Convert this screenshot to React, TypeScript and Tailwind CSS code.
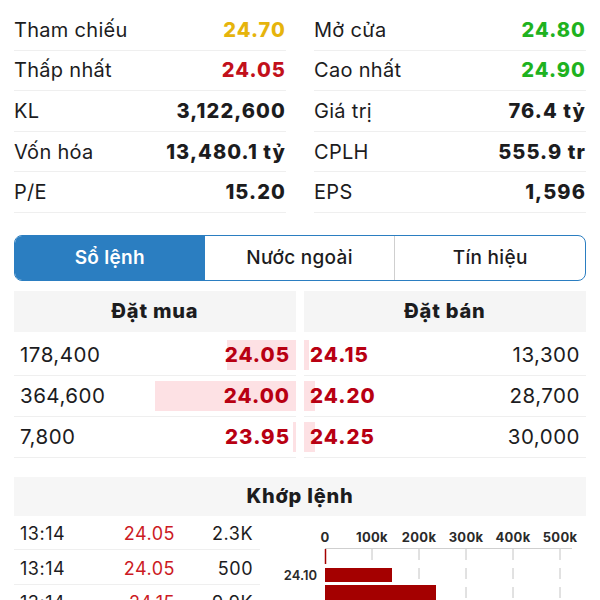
import React from 'react';

const stats = [
  { left: ['Tham chiếu', '24.70', 'text-[#e6b40c]'], right: ['Mở cửa', '24.80', 'text-[#1fb21f]'] },
  { left: ['Thấp nhất', '24.05', 'text-[#c2101b]'], right: ['Cao nhất', '24.90', 'text-[#1fb21f]'] },
  { left: ['KL', '3,122,600', 'text-[#1c1c1e]'], right: ['Giá trị', '76.4 tỷ', 'text-[#1c1c1e]'] },
  { left: ['Vốn hóa', '13,480.1 tỷ', 'text-[#1c1c1e]'], right: ['CPLH', '555.9 tr', 'text-[#1c1c1e]'] },
  { left: ['P/E', '15.20', 'text-[#1c1c1e]'], right: ['EPS', '1,596', 'text-[#1c1c1e]'] },
];

const bids = [
  { qty: '178,400', price: '24.05', bar: 69 },
  { qty: '364,600', price: '24.00', bar: 141 },
  { qty: '7,800', price: '23.95', bar: 3 },
];

const asks = [
  { qty: '13,300', price: '24.15', bar: 5 },
  { qty: '28,700', price: '24.20', bar: 11 },
  { qty: '30,000', price: '24.25', bar: 11 },
];

const trades = [
  ['13:14', '24.05', '2.3K'],
  ['13:14', '24.05', '500'],
  ['13:14', '24.15', '9.9K'],
];

function StatCell({ label, value, color }: { label: string; value: string; color: string }) {
  return (
    <div className="flex items-center justify-between h-[40.6px] border-b border-[#efefef]">
      <span className="text-[20px] tracking-[0.3px] text-[#1c1c1e]">{label}</span>
      <span className={`text-[20px] font-extrabold tracking-[1.1px] ${color}`}>{value}</span>
    </div>
  );
}

function VolumeChart() {
  const ticks = ['0', '100k', '200k', '300k', '400k', '500k'];
  return (
    <svg width="316" height="84" className="block">
      {ticks.map((t, i) => (
        <text key={t} x={55 + i * 47} y={26} textAnchor="middle" fontSize="13" fontWeight="700" fill="#2a2a2a" fontFamily="Inter, sans-serif" letterSpacing="0.3">
          {t}
        </text>
      ))}
      <line x1="55" y1="32.5" x2="302" y2="32.5" stroke="#cfcfcf" strokeWidth="1" />
      {ticks.slice(1).map((t, i) => (
        <line key={t} x1={102 + i * 47} y1="33" x2={102 + i * 47} y2="84" stroke="#c4c4c4" strokeWidth="1" strokeDasharray="11 8" />
      ))}
      <line x1="55.5" y1="33" x2="55.5" y2="48" stroke="#a40000" strokeWidth="1.5" />
      <text x={47} y={64} textAnchor="end" fontSize="13" fontWeight="600" fill="#2a2a2a" fontFamily="Inter, sans-serif">
        24.10
      </text>
      <rect x="55" y="52" width="67" height="14" fill="#a40000" />
      <rect x="55" y="69" width="111" height="15" fill="#a40000" />
    </svg>
  );
}

export default function App() {
  return (
    <div className="w-[600px] h-[600px] overflow-hidden bg-white px-[14px] pt-[10px]" style={{ fontFamily: 'Inter, "Noto Sans", sans-serif' }}>
      {/* Thông tin giá */}
      <div className="grid grid-cols-2 gap-x-[28px]">
        <div className="flex flex-col">
          {stats.map((s) => (
            <StatCell key={s.left[0]} label={s.left[0]} value={s.left[1]} color={s.left[2]} />
          ))}
        </div>
        <div className="flex flex-col">
          {stats.map((s) => (
            <StatCell key={s.right[0]} label={s.right[0]} value={s.right[1]} color={s.right[2]} />
          ))}
        </div>
      </div>

      {/* Tabs */}
      <div className="mt-[22px] flex h-[46px] rounded-[8px] border border-[#2b7ec1] overflow-hidden">
        <div className="flex-1 flex items-center justify-center bg-[#2b7ec1] text-white text-[19px] font-semibold tracking-[0.3px]">Sổ lệnh</div>
        <div className="flex-1 flex items-center justify-center text-[#1c1c1e] text-[19px] font-medium tracking-[0.3px] border-r border-[#cfcfcf]">Nước ngoài</div>
        <div className="flex-1 flex items-center justify-center text-[#1c1c1e] text-[19px] font-medium tracking-[0.3px]">Tín hiệu</div>
      </div>

      {/* Sổ lệnh */}
      <div className="mt-[10px] grid grid-cols-2 gap-x-[8px]">
        <div>
          <div className="h-[41px] mb-[3px] flex items-center justify-center bg-[#f5f5f5] text-[20px] font-extrabold tracking-[0.8px] text-[#1c1c1e]">Đặt mua</div>
          {bids.map((b) => (
            <div key={b.qty} className="relative h-[41px] flex items-center justify-between px-[6px] border-b border-[#efefef]">
              <div className="absolute right-0 top-[5px] bottom-[5px] bg-[#fde1e4]" style={{ width: b.bar }} />
              <span className="relative text-[20.5px] tracking-[0.5px] text-[#1c1c1e]">{b.qty}</span>
              <span className="relative text-[20.5px] font-extrabold tracking-[1px] text-[#b80012]">{b.price}</span>
            </div>
          ))}
        </div>
        <div>
          <div className="h-[41px] mb-[3px] flex items-center justify-center bg-[#f5f5f5] text-[20px] font-extrabold tracking-[0.8px] text-[#1c1c1e]">Đặt bán</div>
          {asks.map((a) => (
            <div key={a.qty} className="relative h-[41px] flex items-center justify-between px-[6px] border-b border-[#efefef]">
              <div className="absolute left-0 top-[5px] bottom-[5px] bg-[#fde1e4]" style={{ width: a.bar }} />
              <span className="relative text-[20.5px] font-extrabold tracking-[1px] text-[#b80012]">{a.price}</span>
              <span className="relative text-[20.5px] tracking-[0.5px] text-[#1c1c1e]">{a.qty}</span>
            </div>
          ))}
        </div>
      </div>

      {/* Khớp lệnh */}
      <div className="mt-[19px] h-[39px] flex items-center justify-center bg-[#f6f6f6] text-[20px] font-extrabold tracking-[0.8px] text-[#1c1c1e]">Khớp lệnh</div>
      <div className="flex">
        <div className="w-[246px]">
          {trades.map((t, i) => (
            <div key={i} className="h-[34.5px] grid grid-cols-[95px_60px_78px] items-center pl-[6px] pt-[2px] border-b border-[#efefef] text-[18px] tracking-[0.5px]">
              <span className="text-[#1c1c1e]">{t[0]}</span>
              <span className="text-right text-[#cc1a24]">{t[1]}</span>
              <span className="text-right text-[#1c1c1e]">{t[2]}</span>
            </div>
          ))}
        </div>
        <div className="ml-[10px]">
          <VolumeChart />
        </div>
      </div>
    </div>
  );
}
